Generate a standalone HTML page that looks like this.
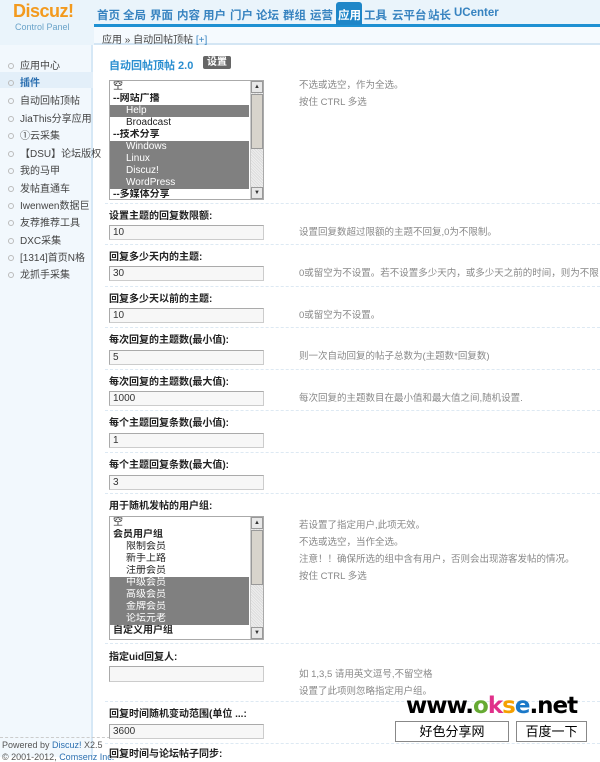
<!DOCTYPE html>
<html><head><meta charset="utf-8"><style>
*{margin:0;padding:0;box-sizing:border-box}
body{width:600px;height:757px;overflow:hidden;background:#fff;font-family:"Liberation Sans","Noto Sans CJK SC",sans-serif;font-size:11px;color:#333;position:relative}
.a{position:absolute;white-space:nowrap}
#hd{left:0;top:0;width:600px;height:45px;background:#eaf4fb}
#side{left:0;top:45px;width:93px;height:712px;background:#f2f8fd;border-right:2px solid #d6e8f6}
.nav{top:7px;font-size:11.5px;font-weight:bold;color:#3783c0}
.si{left:8px;font-size:10px;color:#444}
.si:before{content:"";display:inline-block;width:4px;height:4px;border:1px solid #bbb;border-radius:50%;margin-right:6px;vertical-align:middle}
.lb{left:109px;font-size:10px;font-weight:bold;color:#222}
.in{left:109px;width:155px;height:15px;border:1px solid #aaa;border-bottom-color:#ccc;border-right-color:#ccc;background:#f7f7f7;font-size:10px;padding-left:3px;line-height:13px;color:#333}
.ds{left:299px;font-size:9.5px;color:#888;line-height:12px}
.sep{left:105px;width:495px;height:0;border-top:1px dashed #dde9f3}
.sel{left:109px;width:155px;border:1px solid #aaa;background:#fff;overflow:hidden}
.op{height:12px;line-height:12px;font-size:10px;padding-left:3px;color:#222;width:139px;overflow:hidden}
.op.s{background:#808080;color:#fff}
.op.b{font-weight:bold}
.op.i{padding-left:16px}
.sb{position:absolute;right:0;top:0;width:13px;height:100%;background:repeating-linear-gradient(45deg,#eee 0 1px,#ddd 1px 2px);border-left:1px solid #ccc}
.sb .u,.sb .d{position:absolute;left:0;width:12px;height:12px;background:#e8e8e8;border:1px solid #999;font-size:6px;text-align:center;line-height:10px}
.sb .t{position:absolute;left:0;top:13px;width:12px;height:55px;background:#d8d4cc;border:1px solid #999}
.btn{border:1px solid #888;background:#fff;font-size:13px;text-align:center;line-height:19px;height:21px;color:#000}
</style></head><body>
<div class="a" id="hd"></div>
<div class="a" style="left:94px;top:24px;width:506px;height:3px;background:#1e90d2"></div>
<div class="a" style="left:94px;top:27px;width:506px;height:18px;background:#f5fafe;border-bottom:2px solid #d4e6f4"></div>
<div class="a" style="left:13px;top:1px;font-size:18px;font-weight:bold;color:#f39a1e;letter-spacing:-0.5px">Discuz!</div>
<div class="a" style="left:15px;top:22px;font-size:9px;color:#6aa3c9">Control Panel</div>
<div class="a nav" style="left:97px">首页</div>
<div class="a nav" style="left:123px">全局</div>
<div class="a nav" style="left:150px">界面</div>
<div class="a nav" style="left:177px">内容</div>
<div class="a nav" style="left:203px">用户</div>
<div class="a nav" style="left:230px">门户</div>
<div class="a nav" style="left:256px">论坛</div>
<div class="a nav" style="left:283px">群组</div>
<div class="a nav" style="left:310px">运营</div>
<div class="a" style="left:336px;top:2px;width:26px;height:23px;background:#1e86c8;border-radius:3px 3px 0 0"></div>
<div class="a nav" style="left:338px;color:#fff">应用</div>
<div class="a nav" style="left:364px">工具</div>
<div class="a nav" style="left:392px">云平台</div>
<div class="a nav" style="left:428px">站长</div>
<div class="a nav" style="left:454px">UCenter</div>
<div class="a" style="left:102px;top:31px;font-size:10px;color:#444">应用 » 自动回帖顶帖 <span style="color:#3783c0">[+]</span></div>

<div class="a" id="side"></div>
<div class="a si" style="top:57px">应用中心</div>
<div class="a" style="left:0;top:72px;width:93px;height:16px;background:#e3eff9"></div>
<div class="a si" style="top:74px;font-weight:bold;color:#2b6fb0">插件</div>
<div class="a si" style="top:92px">自动回帖顶帖</div>
<div class="a si" style="top:110px">JiaThis分享应用</div>
<div class="a si" style="top:127px">①云采集</div>
<div class="a si" style="top:145px">【DSU】论坛版权</div>
<div class="a si" style="top:162px">我的马甲</div>
<div class="a si" style="top:180px">发帖直通车</div>
<div class="a si" style="top:197px;width:85px;overflow:hidden">Iwenwen数据巨</div>
<div class="a si" style="top:214px">友荐推荐工具</div>
<div class="a si" style="top:232px">DXC采集</div>
<div class="a si" style="top:249px;width:85px;overflow:hidden">[1314]首页N格</div>
<div class="a si" style="top:266px">龙抓手采集</div>
<div class="a" style="left:0;top:737px;width:110px;border-top:1px dashed #ccc"></div>
<div class="a" style="left:2px;top:740px;font-size:9px;color:#555">Powered by <span style="color:#2b6fb0">Discuz!</span> X2.5</div>
<div class="a" style="left:2px;top:752px;font-size:9px;color:#555">© 2001-2012, <span style="color:#2b6fb0">Comsenz Inc.</span></div>

<div class="a" style="left:109px;top:57px;font-size:11px;font-weight:bold;color:#2a8ed0">自动回帖顶帖 2.0</div>
<div class="a" style="left:203px;top:56px;background:#666;color:#fff;font-size:10px;font-weight:bold;padding:0 4px;line-height:13px;border-radius:2px">设置</div>

<div class="a sel" style="top:80px;height:120px">
<div class="op">空</div><div class="op b">--网站广播</div><div class="op s i">Help</div><div class="op i">Broadcast</div><div class="op b">--技术分享</div><div class="op s i">Windows</div><div class="op s i">Linux</div><div class="op s i">Discuz!</div><div class="op s i">WordPress</div><div class="op b">--多媒体分享</div>
<div class="sb"><div class="u" style="top:0">▲</div><div class="t"></div><div class="d" style="bottom:0">▼</div></div>
</div>
<div class="a ds" style="top:80px">不选或选空，作为全选。</div>
<div class="a ds" style="top:97px">按住 CTRL 多选</div>

<div class="a sep" style="top:203px"></div>
<div class="a lb" style="top:207px">设置主题的回复数限额:</div>
<div class="a in" style="top:225px">10</div>
<div class="a ds" style="top:227px">设置回复数超过限额的主题不回复,0为不限制。</div>
<div class="a sep" style="top:244px"></div>
<div class="a lb" style="top:248px">回复多少天内的主题:</div>
<div class="a in" style="top:266px">30</div>
<div class="a ds" style="top:268px">0或留空为不设置。若不设置多少天内，或多少天之前的时间，则为不限</div>
<div class="a sep" style="top:286px"></div>
<div class="a lb" style="top:290px">回复多少天以前的主题:</div>
<div class="a in" style="top:308px">10</div>
<div class="a ds" style="top:310px">0或留空为不设置。</div>
<div class="a sep" style="top:327px"></div>
<div class="a lb" style="top:331px">每次回复的主题数(最小值):</div>
<div class="a in" style="top:350px">5</div>
<div class="a ds" style="top:351px">则一次自动回复的帖子总数为(主题数*回复数)</div>
<div class="a sep" style="top:369px"></div>
<div class="a lb" style="top:373px">每次回复的主题数(最大值):</div>
<div class="a in" style="top:391px">1000</div>
<div class="a ds" style="top:393px">每次回复的主题数目在最小值和最大值之间,随机设置.</div>
<div class="a sep" style="top:410px"></div>
<div class="a lb" style="top:414px">每个主题回复条数(最小值):</div>
<div class="a in" style="top:433px">1</div>
<div class="a sep" style="top:452px"></div>
<div class="a lb" style="top:456px">每个主题回复条数(最大值):</div>
<div class="a in" style="top:475px">3</div>
<div class="a sep" style="top:493px"></div>
<div class="a lb" style="top:497px">用于随机发帖的用户组:</div>
<div class="a sel" style="top:516px;height:124px">
<div class="op">空</div><div class="op b">会员用户组</div><div class="op i">限制会员</div><div class="op i">新手上路</div><div class="op i">注册会员</div><div class="op s i">中级会员</div><div class="op s i">高级会员</div><div class="op s i">金牌会员</div><div class="op s i">论坛元老</div><div class="op b">自定义用户组</div>
<div class="sb"><div class="u" style="top:0">▲</div><div class="t"></div><div class="d" style="bottom:0">▼</div></div>
</div>
<div class="a ds" style="top:520px">若设置了指定用户,此项无效。</div>
<div class="a ds" style="top:537px">不选或选空，当作全选。</div>
<div class="a ds" style="top:554px">注意！！确保所选的组中含有用户，否则会出现游客发帖的情况。</div>
<div class="a ds" style="top:571px">按住 CTRL 多选</div>
<div class="a sep" style="top:643px"></div>
<div class="a lb" style="top:648px">指定uid回复人:</div>
<div class="a in" style="top:666px;height:16px"></div>
<div class="a ds" style="top:669px">如 1,3,5 请用英文逗号,不留空格</div>
<div class="a ds" style="top:686px">设置了此项则忽略指定用户组。</div>
<div class="a sep" style="top:701px"></div>
<div class="a lb" style="top:705px">回复时间随机变动范围(单位 ...:</div>
<div class="a in" style="top:724px">3600</div>
<div class="a sep" style="top:743px"></div>
<div class="a lb" style="top:745px">回复时间与论坛帖子同步:</div>

<div class="a" style="left:406px;top:693px;font-family:'DejaVu Sans','Liberation Sans',sans-serif;font-size:23px;font-weight:bold;color:#000;letter-spacing:-1px">www.<span style="color:#6a3">o</span><span style="color:#e0308a">k</span><span style="color:#f5a000">s</span><span style="color:#1a78c8">e</span>.net</div>
<div class="a btn" style="left:395px;top:721px;width:114px">好色分享网</div>
<div class="a btn" style="left:516px;top:721px;width:71px">百度一下</div>
</body></html>
